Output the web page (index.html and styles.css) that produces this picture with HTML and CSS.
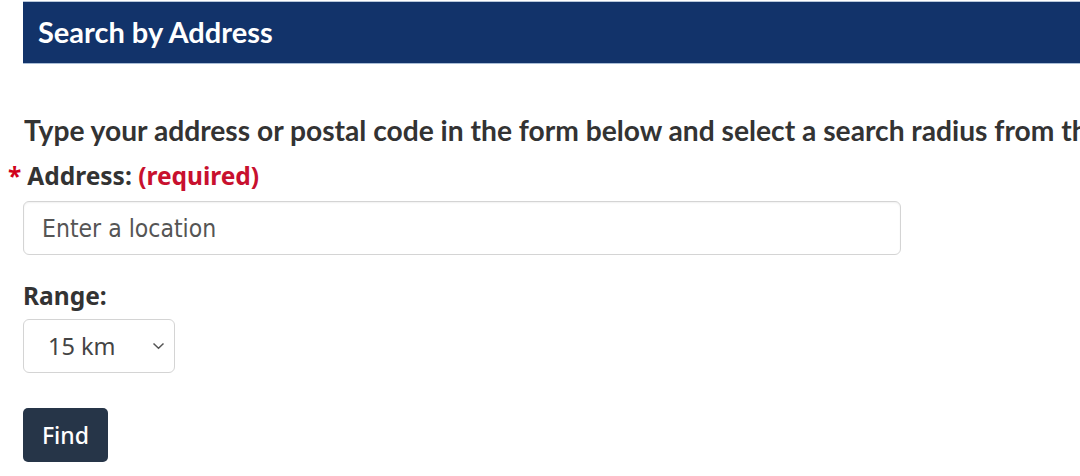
FILE: index.html
```html
<!DOCTYPE html>
<html>
<head>
<meta charset="utf-8">
<link rel="stylesheet" href="styles.css">
</head>
<body>
<div class="page">
  <div class="banner"><h2 class="banner-title">Search by Address</h2></div>
  <p class="intro">Type your address or postal code in the form below and select a search radius from the list.</p>
  <form class="form">
    <label class="label"><span class="star">*</span>Address: <span class="req">(required)</span></label>
    <input class="input" type="text" placeholder="Enter a location">
    <label class="label range-label">Range:</label>
    <div class="select">
      <span class="select-value">15 km</span>
      <svg class="chev" width="13" height="8" viewBox="0 0 13 8"><path d="M1.5 1.5 L6.5 6.3 L11.5 1.5" fill="none" stroke="#555" stroke-width="1.5"/></svg>
    </div>
    <button class="btn" type="button">Find</button>
  </form>
</div>
</body>
</html>
```
FILE: styles.css
```css
html, body { margin: 0; padding: 0; background: #fff; }
body { overflow: hidden; width: 1080px; height: 476px; }
.page { padding: 2px 0 0 23px; }
.banner {
  background: #12336a;
  height: 61px;
  display: flex;
  align-items: center;
  padding-left: 15px;
  box-shadow: 0 1px 0 #a9bdd6, 0 -1px 0 #b8c7da;
}
.banner-title {
  margin: 0;
  font-family: Lato, "Liberation Sans", sans-serif;
  font-weight: 700;
  font-size: 29px;
  color: #fff;
  padding-bottom: 2px;
}
.intro {
  margin: 49px 0 0 1px;
  font-family: Lato, "Liberation Sans", sans-serif;
  font-weight: 700;
  font-size: 28.2px;
  line-height: 37px;
  color: #333;
  white-space: nowrap;
  overflow: hidden;
}
.form { display: flex; flex-direction: column; align-items: flex-start; }
.label {
  font-family: "Noto Sans", "Open Sans", sans-serif;
  font-weight: 700;
  font-size: 24.5px;
  line-height: 32px;
  color: #333;
  margin-top: 11px;
}
.star { color: #d0021b; margin-left: -15px; margin-right: 6px; }
.req { color: #c8102e; }
.input {
  box-sizing: border-box;
  margin-top: 9px;
  width: 878px;
  height: 54px;
  border: 1px solid #d4d4d4;
  border-radius: 6px;
  padding: 0 18px;
  font-family: "DejaVu Sans Condensed", "Noto Sans", sans-serif;
  font-size: 24.5px;
  color: #333;
  box-shadow: inset 0 1px 2px rgba(0,0,0,0.06);
}
.input::placeholder { color: #555; }
.range-label { margin-top: 25px; }
.select {
  box-sizing: border-box;
  margin-top: 7px;
  width: 152px;
  height: 54px;
  border: 1px solid #d4d4d4;
  border-radius: 6px;
  display: flex;
  align-items: center;
  justify-content: space-between;
  padding: 0 9px 0 24px;
}
.select-value {
  font-family: "Noto Sans", "Open Sans", sans-serif;
  font-size: 23.5px;
  color: #444;
}
.btn {
  margin-top: 35px;
  width: 85px;
  height: 54px;
  background: #263548;
  color: #fff;
  border: 0;
  border-radius: 5px;
  font-family: "Noto Sans", "Open Sans", sans-serif;
  font-size: 23px;
  font-weight: 500;
  padding: 0;
}
```
